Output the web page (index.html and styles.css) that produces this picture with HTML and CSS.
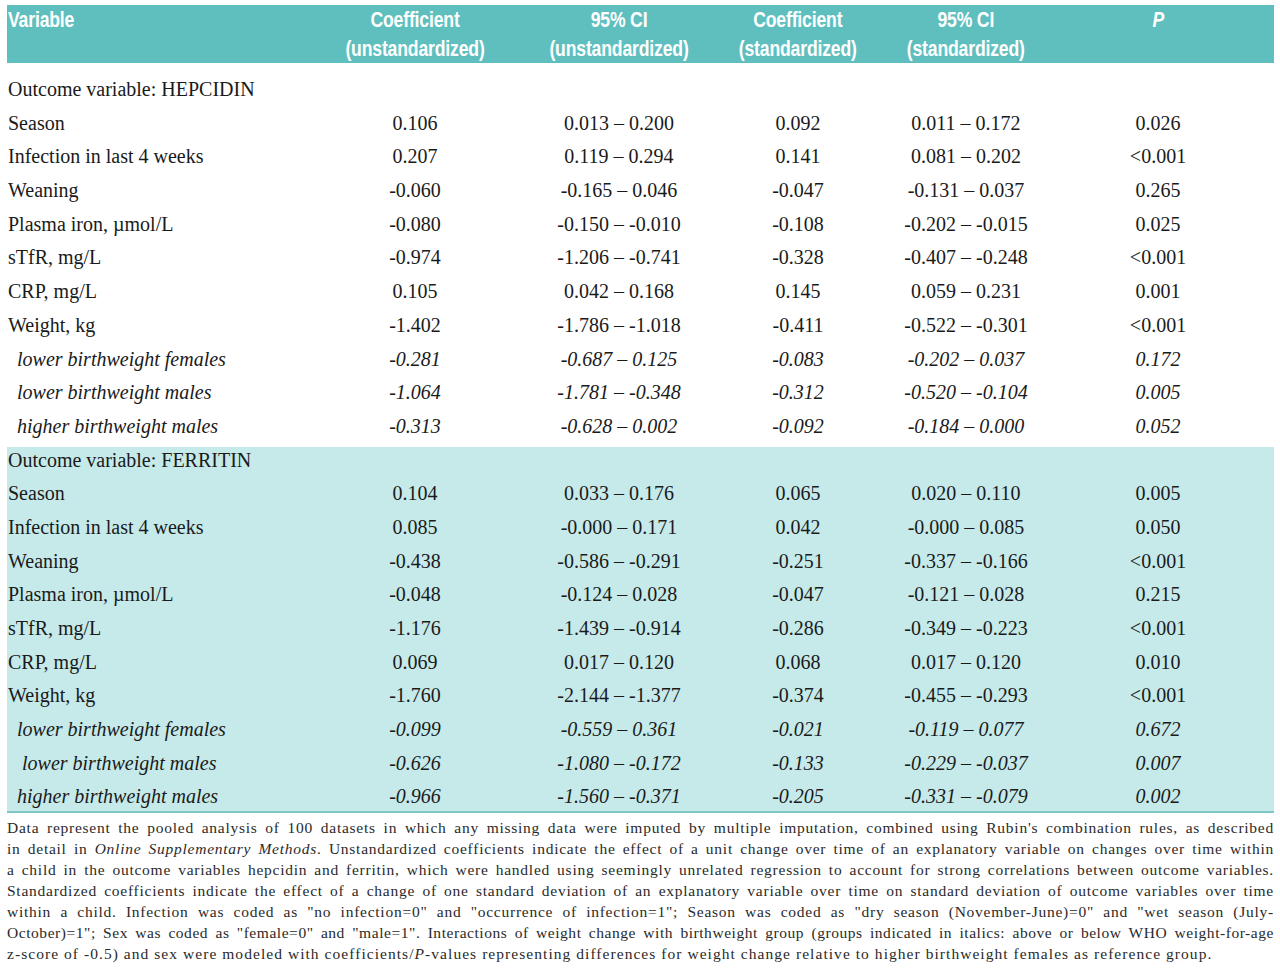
FILE: index.html
```html
<!DOCTYPE html>
<html lang="en">
<head>
<meta charset="utf-8">
<title>Regression table</title>
<link rel="stylesheet" href="styles.css">
</head>
<body>
<div class="page">
  <table class="data">
    <colgroup>
      <col class="c-var"><col class="c-coef"><col class="c-ci"><col class="c-scoef"><col class="c-sci"><col class="c-p">
    </colgroup>
    <thead>
      <tr>
        <th class="var"><span class="h">Variable</span></th>
        <th><span class="h">Coefficient<br>(unstandardized)</span></th>
        <th><span class="h">95% CI<br>(unstandardized)</span></th>
        <th><span class="h">Coefficient<br>(standardized)</span></th>
        <th><span class="h">95% CI<br>(standardized)</span></th>
        <th class="p"><span class="h"><i>P</i></span></th>
      </tr>
    </thead>
    <tbody class="hep">
      <tr class="first"><td class="label" colspan="6">Outcome variable: HEPCIDIN</td></tr>
      <tr><td class="label">Season</td><td>0.106</td><td>0.013 – 0.200</td><td>0.092</td><td>0.011 – 0.172</td><td class="p">0.026</td></tr>
      <tr><td class="label">Infection in last 4 weeks</td><td>0.207</td><td>0.119 – 0.294</td><td>0.141</td><td>0.081 – 0.202</td><td class="p">&lt;0.001</td></tr>
      <tr><td class="label">Weaning</td><td>-0.060</td><td>-0.165 – 0.046</td><td>-0.047</td><td>-0.131 – 0.037</td><td class="p">0.265</td></tr>
      <tr><td class="label">Plasma iron, µmol/L</td><td>-0.080</td><td>-0.150 – -0.010</td><td>-0.108</td><td>-0.202 – -0.015</td><td class="p">0.025</td></tr>
      <tr><td class="label">sTfR, mg/L</td><td>-0.974</td><td>-1.206 – -0.741</td><td>-0.328</td><td>-0.407 – -0.248</td><td class="p">&lt;0.001</td></tr>
      <tr><td class="label">CRP, mg/L</td><td>0.105</td><td>0.042 – 0.168</td><td>0.145</td><td>0.059 – 0.231</td><td class="p">0.001</td></tr>
      <tr><td class="label">Weight, kg</td><td>-1.402</td><td>-1.786 – -1.018</td><td>-0.411</td><td>-0.522 – -0.301</td><td class="p">&lt;0.001</td></tr>
      <tr class="sub"><td class="label">lower birthweight females</td><td>-0.281</td><td>-0.687 – 0.125</td><td>-0.083</td><td>-0.202 – 0.037</td><td class="p">0.172</td></tr>
      <tr class="sub"><td class="label">lower birthweight males</td><td>-1.064</td><td>-1.781 – -0.348</td><td>-0.312</td><td>-0.520 – -0.104</td><td class="p">0.005</td></tr>
      <tr class="sub"><td class="label">higher birthweight males</td><td>-0.313</td><td>-0.628 – 0.002</td><td>-0.092</td><td>-0.184 – 0.000</td><td class="p">0.052</td></tr>
    </tbody>
    <tbody class="fer">
      <tr><td class="label" colspan="6">Outcome variable: FERRITIN</td></tr>
      <tr><td class="label">Season</td><td>0.104</td><td>0.033 – 0.176</td><td>0.065</td><td>0.020 – 0.110</td><td class="p">0.005</td></tr>
      <tr><td class="label">Infection in last 4 weeks</td><td>0.085</td><td>-0.000 – 0.171</td><td>0.042</td><td>-0.000 – 0.085</td><td class="p">0.050</td></tr>
      <tr><td class="label">Weaning</td><td>-0.438</td><td>-0.586 – -0.291</td><td>-0.251</td><td>-0.337 – -0.166</td><td class="p">&lt;0.001</td></tr>
      <tr><td class="label">Plasma iron, µmol/L</td><td>-0.048</td><td>-0.124 – 0.028</td><td>-0.047</td><td>-0.121 – 0.028</td><td class="p">0.215</td></tr>
      <tr><td class="label">sTfR, mg/L</td><td>-1.176</td><td>-1.439 – -0.914</td><td>-0.286</td><td>-0.349 – -0.223</td><td class="p">&lt;0.001</td></tr>
      <tr><td class="label">CRP, mg/L</td><td>0.069</td><td>0.017 – 0.120</td><td>0.068</td><td>0.017 – 0.120</td><td class="p">0.010</td></tr>
      <tr><td class="label">Weight, kg</td><td>-1.760</td><td>-2.144 – -1.377</td><td>-0.374</td><td>-0.455 – -0.293</td><td class="p">&lt;0.001</td></tr>
      <tr class="sub"><td class="label">lower birthweight females</td><td>-0.099</td><td>-0.559 – 0.361</td><td>-0.021</td><td>-0.119 – 0.077</td><td class="p">0.672</td></tr>
      <tr class="sub"><td class="label deep">lower birthweight males</td><td>-0.626</td><td>-1.080 – -0.172</td><td>-0.133</td><td>-0.229 – -0.037</td><td class="p">0.007</td></tr>
      <tr class="sub last"><td class="label">higher birthweight males</td><td>-0.966</td><td>-1.560 – -0.371</td><td>-0.205</td><td>-0.331 – -0.079</td><td class="p">0.002</td></tr>
    </tbody>
  </table>
  <div class="notes">
    <span class="line">Data represent the pooled analysis of 100 datasets in which any missing data were imputed by multiple imputation, combined using Rubin's combination rules, as described</span>
    <span class="line">in detail in <i>Online Supplementary Methods</i>. Unstandardized coefficients indicate the effect of a unit change over time of an explanatory variable on changes over time within</span>
    <span class="line">a child in the outcome variables hepcidin and ferritin, which were handled using seemingly unrelated regression to account for strong correlations between outcome variables.</span>
    <span class="line">Standardized coefficients indicate the effect of a change of one standard deviation of an explanatory variable over time on standard deviation of outcome variables over time</span>
    <span class="line">within a child. Infection was coded as "no infection=0" and "occurrence of infection=1"; Season was coded as "dry season (November-June)=0" and "wet season (July-</span>
    <span class="line tight">October)=1"; Sex was coded as "female=0" and "male=1". Interactions of weight change with birthweight group (groups indicated in italics: above or below WHO weight-for-age</span>
    <span class="line end">z-score of -0.5) and sex were modeled with coefficients/<i>P</i>-values representing differences for weight change relative to higher birthweight females as reference group.</span>
  </div>
</div>
</body>
</html>
```

FILE: styles.css
```css
html, body {
  margin: 0;
  padding: 0;
  background: #ffffff;
}

.page {
  width: 1267px;
  padding: 5px 0 0 7px;
}

.data {
  width: 1267px;
  border-collapse: collapse;
  table-layout: fixed;
  font-family: "Liberation Serif", "Times New Roman", serif;
  font-size: 20px;
  color: #1a1a1a;
}

.c-var { width: 306px; }
.c-coef { width: 204px; }
.c-ci { width: 204px; }
.c-scoef { width: 154px; }
.c-sci { width: 182px; }
.c-p { width: 217px; }

.data thead tr {
  background: #5fbfbe;
}

.data th {
  height: 58px;
  padding: 0;
  vertical-align: top;
  text-align: center;
  color: #ffffff;
  font-family: "Liberation Sans", Arial, sans-serif;
  font-weight: bold;
  font-size: 22px;
  line-height: 29px;
  letter-spacing: -0.2px;
  white-space: nowrap;
}

.data th .h {
  display: inline-block;
  transform: scaleX(0.8);
  transform-origin: 50% 0;
}

.data th.var {
  text-align: left;
  padding-left: 1px;
}

.data th.var .h {
  transform-origin: 0 0;
}

.data th.p,
.data td.p {
  padding-right: 15px;
}

.data td {
  padding: 0 0 7.7px 0;
  line-height: 26px;
  vertical-align: top;
  text-align: center;
  white-space: nowrap;
}

.data td.label {
  text-align: left;
  padding-left: 1px;
}

.data tr.first td {
  padding-top: 13px;
}

.data tr.sub td {
  font-style: italic;
}

.data tr.sub td.label {
  padding-left: 10px;
}

.data tr.sub td.label.deep {
  padding-left: 15px;
}

.data tbody.fer {
  background: #c6eaea;
  border-bottom: 2px solid #80c7c6;
}

.data tr.last td {
  padding-bottom: 2px;
}

.notes {
  margin-top: 4px;
  font-family: "Liberation Serif", "Times New Roman", serif;
  font-size: 15.5px;
  line-height: 21px;
  letter-spacing: 0.75px;
  color: #2a2a2a;
}

.notes .line {
  display: block;
  text-align: justify;
  text-align-last: justify;
}

.notes .line.tight {
  letter-spacing: 0.55px;
}

.notes .line.end {
  text-align-last: left;
  letter-spacing: 1.05px;
}
```
